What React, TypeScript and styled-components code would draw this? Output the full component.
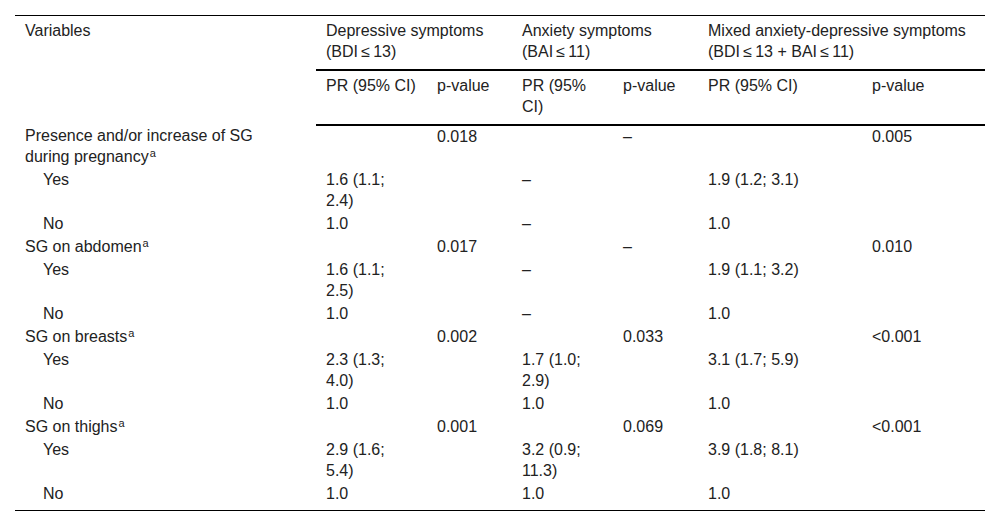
import styled, { createGlobalStyle } from 'styled-components';

type Row = {
    label: string;
    sup?: boolean;
    indent?: boolean;
    cells: string[];
};

const rows: Row[] = [
    { label: 'Presence and/or increase of SG\nduring pregnancy', sup: true, cells: ['', '0.018', '', '–', '', '0.005'] },
    { label: 'Yes', indent: true, cells: ['1.6 (1.1;\n2.4)', '', '–', '', '1.9 (1.2; 3.1)', ''] },
    { label: 'No', indent: true, cells: ['1.0', '', '–', '', '1.0', ''] },
    { label: 'SG on abdomen', sup: true, cells: ['', '0.017', '', '–', '', '0.010'] },
    { label: 'Yes', indent: true, cells: ['1.6 (1.1;\n2.5)', '', '–', '', '1.9 (1.1; 3.2)', ''] },
    { label: 'No', indent: true, cells: ['1.0', '', '–', '', '1.0', ''] },
    { label: 'SG on breasts', sup: true, cells: ['', '0.002', '', '0.033', '', '<0.001'] },
    { label: 'Yes', indent: true, cells: ['2.3 (1.3;\n4.0)', '', '1.7 (1.0;\n2.9)', '', '3.1 (1.7; 5.9)', ''] },
    { label: 'No', indent: true, cells: ['1.0', '', '1.0', '', '1.0', ''] },
    { label: 'SG on thighs', sup: true, cells: ['', '0.001', '', '0.069', '', '<0.001'] },
    { label: 'Yes', indent: true, cells: ['2.9 (1.6;\n5.4)', '', '3.2 (0.9;\n11.3)', '', '3.9 (1.8; 8.1)', ''] },
    { label: 'No', indent: true, cells: ['1.0', '', '1.0', '', '1.0', ''] },
];

const colWidths = [301, 111, 85, 101, 85, 164, 123];

const App = () => {
    return (
        <>
            <GlobalStyle />
            <Table>
                <colgroup>
                    {colWidths.map((w, i) => (
                        <col key={i} style={{ width: w }} />
                    ))}
                </colgroup>
                <thead>
                    <tr>
                        <HeadCell rowSpan={2}>Variables</HeadCell>
                        <HeadCell colSpan={2} $ruled>{'Depressive symptoms\n(BDI\u2009≤\u200913)'}</HeadCell>
                        <HeadCell colSpan={2} $ruled>{'Anxiety symptoms\n(BAI\u2009≤\u200911)'}</HeadCell>
                        <HeadCell colSpan={2} $ruled>{'Mixed anxiety-depressive symptoms\n(BDI\u2009≤\u200913 + BAI\u2009≤\u200911)'}</HeadCell>
                    </tr>
                    <tr>
                        <HeadCell $ruled>PR (95% CI)</HeadCell>
                        <HeadCell $ruled>p-value</HeadCell>
                        <HeadCell $ruled>{'PR (95%\nCI)'}</HeadCell>
                        <HeadCell $ruled>p-value</HeadCell>
                        <HeadCell $ruled>PR (95% CI)</HeadCell>
                        <HeadCell $ruled>p-value</HeadCell>
                    </tr>
                </thead>
                <tbody>
                    {rows.map((row, i) => (
                        <BodyRow key={i}>
                            <BodyCell $indent={row.indent}>
                                {row.label}
                                {row.sup && <Sup>a</Sup>}
                            </BodyCell>
                            {row.cells.map((c, j) => (
                                <BodyCell key={j}>{c}</BodyCell>
                            ))}
                        </BodyRow>
                    ))}
                </tbody>
            </Table>
        </>
    );
};

export default App;

// Styled Components
const GlobalStyle = createGlobalStyle`
  html, body {
    margin: 0;
    padding: 0;
    background: #ffffff;
  }

  body {
    font-family: "Liberation Sans", Arial, sans-serif;
    color: #222;
  }
`;

const Table = styled.table`
  margin: 15px 0 0 15px;
  width: 970px;
  table-layout: fixed;
  border-collapse: collapse;
  border-spacing: 0;
  border-top: 1px solid #000;
  border-bottom: 1px solid #000;
  font-size: 16px;
  line-height: 21px;
`;

const HeadCell = styled.th<{ $ruled?: boolean }>`
  padding: 4px 10px 7px;
  text-align: left;
  vertical-align: top;
  font-weight: normal;
  white-space: pre;
  border-bottom: ${(p) => (p.$ruled ? '2px solid #000' : 'none')};
`;

const BodyRow = styled.tr`
  &:last-child td {
    padding-bottom: 6px;
  }
`;

const BodyCell = styled.td<{ $indent?: boolean }>`
  padding: 0 10px 2px ${(p) => (p.$indent ? '28px' : '10px')};
  text-align: left;
  vertical-align: top;
  white-space: pre;
  line-height: 21px;
`;

const Sup = styled.sup`
  margin-left: 1px;
  font-size: 11px;
  line-height: 0;
  vertical-align: 5px;
`;
